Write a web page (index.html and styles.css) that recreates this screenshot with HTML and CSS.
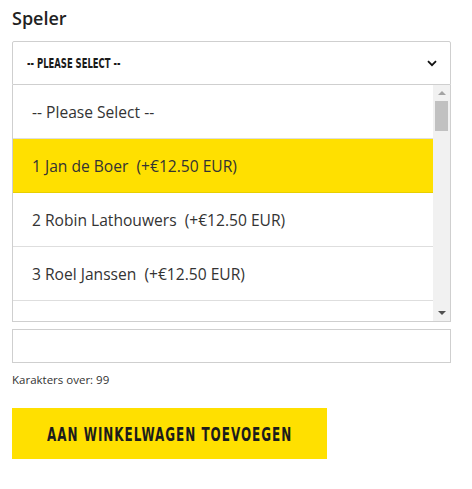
FILE: index.html
```html
<!DOCTYPE html>
<html lang="nl">
<head>
<meta charset="utf-8">
<title>Speler</title>
<link rel="stylesheet" href="styles.css">
</head>
<body>
<div class="form">
  <h2 class="label">Speler</h2>
  <div class="select">
    <div class="select-head">
      <span class="cond head-text">-- PLEASE SELECT --</span>
      <svg class="chev" width="10" height="7" viewBox="0 0 10 7"><path d="M1 1.2 L5 5.2 L9 1.2" fill="none" stroke="#111" stroke-width="1.8"/></svg>
    </div>
    <div class="list">
      <ul class="options">
        <li class="opt">-- Please Select --</li>
        <li class="opt active">1 Jan de Boer&nbsp; (+€12.50 EUR)</li>
        <li class="opt">2 Robin Lathouwers&nbsp; (+€12.50 EUR)</li>
        <li class="opt">3 Roel Janssen&nbsp; (+€12.50 EUR)</li>
        <li class="opt"></li>
      </ul>
      <div class="scrollbar">
        <div class="arrow up"></div>
        <div class="track"><div class="thumb"></div></div>
        <div class="arrow down"></div>
      </div>
    </div>
  </div>
  <div class="text-input"></div>
  <p class="counter">Karakters over: 99</p>
  <button class="btn"><span class="cond btn-text">AAN WINKELWAGEN TOEVOEGEN</span></button>
</div>
</body>
</html>
```
FILE: styles.css
```css
* { box-sizing: border-box; }
html, body { margin: 0; padding: 0; background: #fff; }
body { font-family: "Open Sans", "Liberation Sans", sans-serif; color: #333; }
.form { padding: 6px 21px 0 12px; width: 472px; }
.label { margin: 0; font-size: 18px; line-height: 24px; font-weight: 600; color: #222; }
.select { margin-top: 11px; width: 439px; }
.select-head {
  height: 44px; border: 1px solid #cfcfcf; border-radius: 2px 2px 0 0;
  display: flex; align-items: center; justify-content: space-between;
  padding: 0 13px 0 14px;
}
.cond { font-family: "DejaVu Sans Condensed", "DejaVu Sans", sans-serif; font-weight: bold; display: inline-block; transform-origin: left center; color: #1a1a1a; }
.head-text { font-size: 14px; transform: scaleX(0.67); white-space: nowrap; }
.chev { display: block; }
.list {
  height: 237px; border: 1px solid #cfcfcf; border-top: 0;
  display: flex; overflow: hidden;
}
.options { list-style: none; margin: 0; padding: 0; flex: 1; min-width: 0; }
.opt {
  height: 54px; border-bottom: 1px solid #dedede;
  display: flex; align-items: center; padding-left: 19px;
  font-size: 15.6px; color: #333; white-space: nowrap;
}
.opt.active { background: #ffe000; border-bottom-color: #e8cf00; }
.scrollbar { width: 17px; background: #f1f1f1; display: flex; flex-direction: column; }
.arrow { height: 16px; display: flex; align-items: center; justify-content: center; }
.arrow::before { content: ""; width: 0; height: 0; border-left: 4px solid transparent; border-right: 4px solid transparent; }
.arrow.up::before { border-bottom: 4px solid #a3a3a3; }
.arrow.down::before { border-top: 4px solid #505050; }
.track { flex: 1; padding: 0 2px; }
.thumb { height: 30px; background: #c1c1c1; }
.text-input { margin-top: 7px; width: 439px; height: 34px; border: 1px solid #cfcfcf; }
.counter { margin: 8px 0 0; font-size: 11.5px; line-height: 18px; color: #333; }
.btn {
  margin-top: 19px; width: 315px; height: 51px; border: 0; background: #ffe000;
  padding: 0 0 0 35px; display: flex; align-items: center; cursor: pointer;
}
.btn-text { font-size: 20px; letter-spacing: 1.5px; transform: scaleX(0.665); white-space: nowrap; color: #1c1c1c; }
```
